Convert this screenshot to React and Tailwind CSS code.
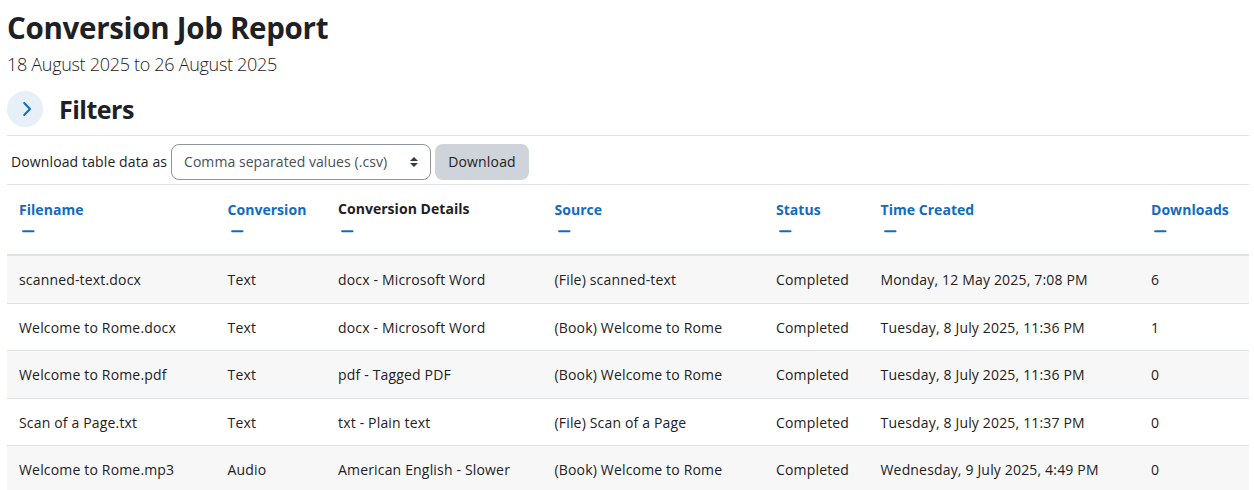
import React from 'react';

const columns = [
  { label: 'Filename', width: 'w-[208.5px]', sortable: true },
  { label: 'Conversion', width: 'w-[110.5px]', sortable: true },
  { label: 'Conversion Details', width: 'w-[216.5px]', sortable: false },
  { label: 'Source', width: 'w-[221.5px]', sortable: true },
  { label: 'Status', width: 'w-[104.5px]', sortable: true },
  { label: 'Time Created', width: 'w-[270.5px]', sortable: true },
  { label: 'Downloads', width: 'w-[110px]', sortable: true },
];

const rows = [
  ['scanned-text.docx', 'Text', 'docx - Microsoft Word', '(File) scanned-text', 'Completed', 'Monday, 12 May 2025, 7:08 PM', '6'],
  ['Welcome to Rome.docx', 'Text', 'docx - Microsoft Word', '(Book) Welcome to Rome', 'Completed', 'Tuesday, 8 July 2025, 11:36 PM', '1'],
  ['Welcome to Rome.pdf', 'Text', 'pdf - Tagged PDF', '(Book) Welcome to Rome', 'Completed', 'Tuesday, 8 July 2025, 11:36 PM', '0'],
  ['Scan of a Page.txt', 'Text', 'txt - Plain text', '(File) Scan of a Page', 'Completed', 'Tuesday, 8 July 2025, 11:37 PM', '0'],
  ['Welcome to Rome.mp3', 'Audio', 'American English - Slower', '(Book) Welcome to Rome', 'Completed', 'Wednesday, 9 July 2025, 4:49 PM', '0'],
];

function HideIcon() {
  return (
    <svg className="block ml-[3px] mt-[9px]" width="13" height="4" viewBox="0 0 13 4">
      <path d="M1.1 2.2H11.5" stroke="#0f6cbf" strokeWidth="2" strokeLinecap="round" />
    </svg>
  );
}

function FiltersHeader() {
  return (
    <div className="flex items-center h-9 mt-[14px]">
      <button className="flex items-center justify-center w-9 h-9 rounded-full bg-[#e7f0f9]">
        <svg className="ml-[4px]" width="10" height="16" viewBox="0 0 10 16" fill="none">
          <path d="M2.2 2L8 8L2.2 14" stroke="#0f6cbf" strokeWidth="2" strokeLinecap="round" strokeLinejoin="round" />
        </svg>
      </button>
      <h3 className="ml-4 text-[25px] leading-9 font-bold tracking-[-0.5px]">Filters</h3>
    </div>
  );
}

function DownloadBar() {
  return (
    <div className="flex items-center w-[1242px] h-[49px] mt-2 pl-1 pt-[7px] pb-1 border-t border-[#dee2e6]">
      <label className="w-40 pt-px whitespace-nowrap tracking-[0.12px]">Download table data as</label>
      <div className="flex items-center justify-between w-[260px] h-9 pl-3 pr-3 rounded-lg border border-[#8f959e] text-[#495057]">
        <span className="pt-[2px] whitespace-nowrap tracking-[0.06px]">Comma separated values (.csv)</span>
        <svg width="8" height="10" viewBox="0 0 8 10">
          <path d="M4 0L8 4H0ZM0 6H8L4 10Z" fill="#343a40" />
        </svg>
      </div>
      <button className="flex items-center justify-center w-[94px] h-9 ml-1 rounded-lg bg-[#ced4da] pt-[2px]">Download</button>
    </div>
  );
}

function JobsTable() {
  return (
    <table className="w-[1242px] table-fixed border-separate border-spacing-0 text-left">
      <thead>
        <tr className="h-[72px]">
          {columns.map((col) => (
            <th key={col.label} className={`${col.width} px-3 pt-[13px] align-top font-bold border-t border-b-2 border-[#dee2e6]`}>
              <div className={col.sortable ? 'h-[22px] leading-[24px] text-[#0f6cbf] tracking-[0.04px]' : 'h-[22px] leading-[22px] tracking-[0.04px]'}>
                {col.label}
              </div>
              <HideIcon />
            </th>
          ))}
        </tr>
      </thead>
      <tbody>
        {rows.map((row) => (
          <tr key={row[0]} className="h-[47.5px] odd:bg-[#f7f7f7]">
            {row.map((cell, i) => (
              <td key={i} className="px-3 pt-[2px] whitespace-nowrap border-b border-[#dee2e6]">{cell}</td>
            ))}
          </tr>
        ))}
      </tbody>
    </table>
  );
}

function App() {
  return (
    <div className="h-[490px] overflow-hidden bg-white pl-[7px] font-['Open_Sans','Noto_Sans',sans-serif] text-[14px] leading-[22.5px] tracking-[0.17px] text-[#1d2125]">
      <h2 className="pt-[10px] text-[29.5px] leading-9 font-bold tracking-[-0.3px]">Conversion Job Report</h2>
      <p className="mt-[5px] text-[18px] leading-[26px] font-light tracking-[-0.3px]">18 August 2025 to 26 August 2025</p>
      <FiltersHeader />
      <DownloadBar />
      <JobsTable />
    </div>
  );
}

export default App;
